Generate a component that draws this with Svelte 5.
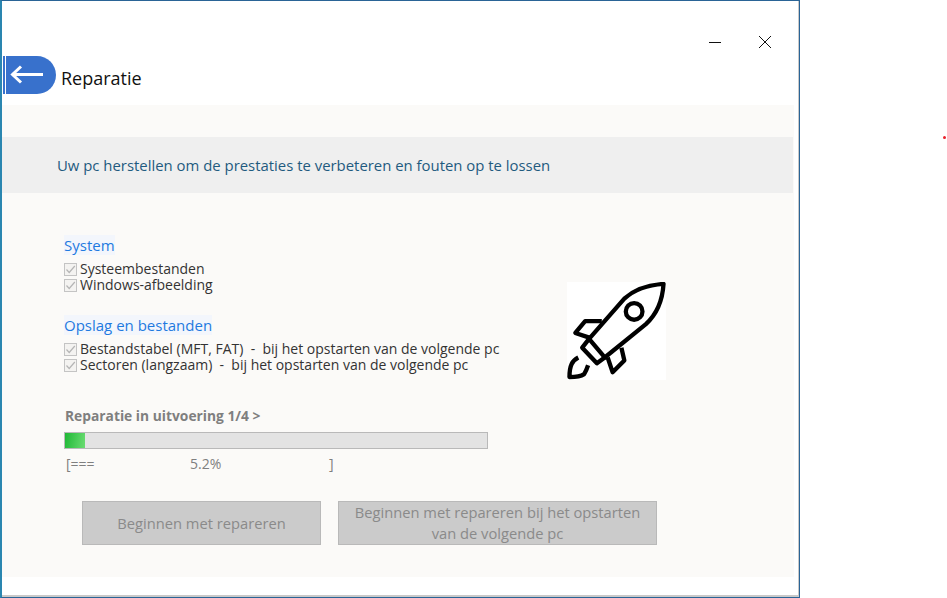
<script>
  const system = ['Systeembestanden', 'Windows-afbeelding'];
  const storage = [
    'Bestandstabel (MFT, FAT)  -  bij het opstarten van de volgende pc',
    'Sectoren (langzaam)  -  bij het opstarten van de volgende pc'
  ];
  const progress = 5.2;
</script>

{#snippet check(label)}
  <div class="check">
    <svg class="box" viewBox="0 0 13 13" width="13" height="13">
      <rect x="0.5" y="0.5" width="12" height="12" fill="#f4f3f1" stroke="#c4c4c4" />
      <path d="M2.5 6.5 L5.2 9.5 L10.8 3" fill="none" stroke="#b5b5b5" stroke-width="1.2" />
    </svg>
    <span>{label}</span>
  </div>
{/snippet}

<div class="dot"></div>

<div class="window">
  <div class="controls">
    <svg viewBox="0 0 14 14" width="14" height="14"><path d="M1 7.5H13" stroke="#111" stroke-width="1" /></svg>
    <svg viewBox="0 0 14 14" width="14" height="14"><path d="M1 1L13 13M13 1L1 13" stroke="#111" stroke-width="1" fill="none" /></svg>
  </div>

  <div class="title-row">
    <div class="back">
      <svg viewBox="0 0 34 20" width="34" height="20">
        <path d="M33 9.5H3M11 1.5L2.5 9.5L11 17.5" fill="none" stroke="#fff" stroke-width="3" />
      </svg>
    </div>
    <h1>Reparatie</h1>
  </div>

  <div class="panel">
    <div class="band">Uw pc herstellen om de prestaties te verbeteren en fouten op te lossen</div>

    <div class="middle">
      <div class="options">
        <h2>System</h2>
        {#each system as item}
          {@render check(item)}
        {/each}
        <h2 class="second">Opslag en bestanden</h2>
        {#each storage as item}
          {@render check(item)}
        {/each}
      </div>
      <div class="rocket">
        <svg viewBox="0 0 100 100" width="99" height="98" fill="none" stroke="#000" stroke-width="4.4" stroke-linejoin="round">
          <path d="M98 2C82 3 69 7 58 17L22 58L38 77L80 43C91 33 97 18 98 2Z" />
          <circle cx="68" cy="30" r="8.5" />
          <path d="M22 58L15 67L30 83L38 77" />
          <path d="M35 40H18L8 52L23 57" />
          <path d="M55 67L58 80L46 92L41 77" />
          <path d="M11 77C5 80 2 85 2 97C8 97 14 96 17 94C19 91 20 88 21 85" />
        </svg>
      </div>
    </div>

    <div class="status">Reparatie in uitvoering 1/4 &gt;</div>
    <div class="bar"><div class="fill" style="width: {progress * 3.85}px"></div></div>
    <div class="ascii">
      <span>[===</span>
      <span class="pct">{progress}%</span>
      <span class="close">]</span>
    </div>

    <div class="buttons">
      <button class="first" disabled>Beginnen met repareren</button>
      <button class="later" disabled>Beginnen met repareren bij het opstarten van de volgende pc</button>
    </div>
  </div>
</div>

<style>
  :global(body) {
    margin: 0;
    background: #fff;
  }

  .dot {
    position: absolute;
    top: 136px;
    left: 943px;
    width: 3px;
    height: 3px;
    border-radius: 50%;
    background: #e8202a;
  }

  .window {
    position: relative;
    box-sizing: border-box;
    width: 800px;
    height: 598px;
    background: #fff;
    border: 1px solid #2a6496;
    border-left: 2px solid #2a86b0;
    box-shadow: inset -1px -2px 0 #c9c9c9;
    font-family: "Open Sans", "Noto Sans", sans-serif;
    overflow: hidden;
  }

  .controls {
    position: absolute;
    top: 34px;
    left: 706px;
    display: flex;
    gap: 36px;
  }

  .title-row {
    display: flex;
    align-items: flex-start;
    height: 104px;
    padding-top: 55px;
    box-sizing: border-box;
  }

  .back {
    display: flex;
    align-items: center;
    box-sizing: border-box;
    width: 53px;
    height: 38px;
    margin-left: 1px;
    padding-left: 7px;
    background: linear-gradient(90deg, #3871cc 2px, #fff 2px, #fff 3px, #3871cc 3px);
    border-radius: 0 19px 19px 0;
  }

  h1 {
    margin: 9px 0 0 5px;
    font-size: 18px;
    line-height: 26px;
    font-weight: 400;
    color: #111;
  }

  .panel {
    width: 792px;
    height: 472px;
    background: #fbfaf8;
  }

  .band {
    display: flex;
    align-items: center;
    width: 791px;
    height: 56px;
    position: relative;
    top: 32px;
    padding-left: 55px;
    box-sizing: border-box;
    background: #efefef;
    color: #1f5b7f;
    font-size: 14.9px;
  }

  .middle {
    display: flex;
    margin-top: 32px;
    padding: 42px 0 0 62px;
    height: 182px;
    box-sizing: border-box;
  }

  .options {
    width: 503px;
  }

  h2 {
    display: table;
    margin: 0 0 6px;
    font-size: 15px;
    line-height: 20px;
    font-weight: 400;
    color: #1f7ae0;
    background: #f3f6fc;
  }

  h2.second {
    margin-top: 22px;
  }

  .check {
    display: flex;
    align-items: center;
    height: 16px;
    font-size: 14px;
    line-height: 16px;
    color: #333;
    white-space: pre;
  }

  .box {
    margin-right: 3px;
    flex: none;
  }

  .rocket {
    display: flex;
    align-items: center;
    justify-content: center;
    width: 99px;
    height: 98px;
    margin-top: 47px;
    background: #fff;
  }

  .status {
    margin: 32px 0 0 63px;
    font-size: 13.8px;
    line-height: 18px;
    font-weight: 700;
    color: #7f7f7f;
  }

  .bar {
    width: 424px;
    height: 17px;
    margin: 7px 0 0 62px;
    box-sizing: border-box;
    background: #e3e3e3;
    border: 1px solid #b9b9b9;
  }

  .fill {
    height: 100%;
    background: linear-gradient(100deg, #1fb836, #6bdc72);
  }

  .ascii {
    position: relative;
    width: 424px;
    height: 20px;
    margin: 6px 0 0 62px;
    font-size: 14px;
    line-height: 18px;
    color: #7f7f7f;
  }

  .ascii span {
    position: absolute;
    top: 0;
  }

  .ascii span:first-child { left: 2px; }
  .ascii .pct { left: 126px; }
  .ascii .close { left: 265px; }

  .buttons {
    display: flex;
    gap: 17px;
    margin: 26px 0 0 80px;
  }

  button {
    box-sizing: border-box;
    height: 44px;
    padding: 0 10px;
    background: #cbcbcb;
    border: 1px solid #b9b9b9;
    color: #8a8a8a;
    font: inherit;
    font-size: 14.7px;
    line-height: 21px;
  }

  .first { width: 239px; }
  .later { width: 319px; }
</style>
